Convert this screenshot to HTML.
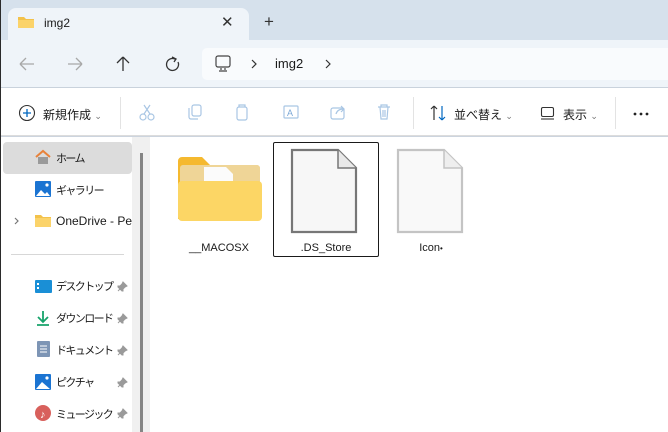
<!DOCTYPE html>
<html><head><meta charset="utf-8"><style>
*{margin:0;padding:0;box-sizing:border-box}
body{width:668px;height:432px;overflow:hidden;background:#fff;font-family:"Segoe UI","Liberation Sans","Noto Sans CJK JP",sans-serif;font-size:12px;color:#1a1a1a;position:relative}
.abs{position:absolute}
#tabbar{left:0;top:0;width:668px;height:40px;background:#d6e1ec}
#tab{left:8px;top:8px;width:241px;height:34px;background:#eff4f9;border-radius:8px 8px 0 0}
#nav{left:0;top:40px;width:668px;height:48px;background:#eff4f9;border-bottom:1px solid #c9d2dc}
#addr{left:202px;top:48px;width:466px;height:32px;background:#f9fbfd;border-radius:5px 0 0 5px}
#tool{left:0;top:89px;width:668px;height:47px;background:#fff;border-bottom:1px solid #dcdcdc}
.sep{position:absolute;top:97px;width:1px;height:32px;background:#e3e3e3}
#lb{left:0;top:0;width:1px;height:432px;background:#2b2b2b}
.side{position:absolute;left:34px;font-size:11px;letter-spacing:-1.6px;color:#1a1a1a;white-space:nowrap}
.pin{position:absolute;left:117px}
.lbl{position:absolute;font-size:11px;color:#1a1a1a;text-align:center}
.tt{position:absolute;font-size:12px}
</style></head><body>
<div class="abs" id="tabbar"></div>
<div class="abs" id="tab"></div>
<svg class="abs" style="left:17px;top:15px" width="18" height="14"><path d="M1 2h6l2 2h8v9H1z" fill="#f3c24b"/><path d="M1 5h16v8H1z" fill="#fbd36a"/></svg>
<div class="tt" style="left:44px;top:16px;font-size:12px">img2</div>
<div class="tt" style="left:221px;top:13px;font-size:15px;color:#333">✕</div>
<div class="tt" style="left:264px;top:12px;font-size:17px;color:#333">+</div>
<div class="abs" id="nav"></div>
<div class="abs" id="addr"></div>
<svg class="abs" style="left:18px;top:55px" width="200" height="18" fill="none" stroke-width="1.3">
<path d="M2 9h14M2 9l6-6M2 9l6 6" stroke="#a8a8a8"/>
<path d="M50 9h14M64 9l-6-6M64 9l-6 6" stroke="#a8a8a8"/>
<path d="M105 2v14M105 2l-6 6M105 2l6 6" stroke="#333"/>
<path d="M157 4a6 6 0 1 0 3 3M154 2l4 2-2 3" stroke="#333"/>
</svg>
<svg class="abs" style="left:214px;top:55px" width="20" height="18" fill="none" stroke="#444" stroke-width="1.2"><rect x="2" y="1" width="14" height="11" rx="2"/><path d="M7 13v2M11 13v2M5 16h8"/></svg>
<svg class="abs" style="left:250px;top:58px" width="100" height="12" fill="none" stroke="#333" stroke-width="1.2"><path d="M2 2l4 4-4 4"/><path d="M76 2l4 4-4 4"/></svg>
<div class="tt" style="left:275px;top:56px;font-size:13px">img2</div>
<div class="abs" id="tool"></div>
<div class="sep" style="left:120px"></div><div class="sep" style="left:413px"></div><div class="sep" style="left:615px"></div>
<svg class="abs" style="left:18px;top:104px" width="18" height="18" fill="none"><circle cx="9" cy="9" r="7.5" stroke="#333" stroke-width="1.1"/><path d="M9 5v8M5 9h8" stroke="#0067c0" stroke-width="1.3"/></svg>
<div class="tt" style="left:43px;top:106px">新規作成 <span style="font-size:9px;color:#777">⌄</span></div>
<svg class="abs" style="left:138px;top:102px" width="260" height="22" fill="none" stroke="#a9c6e4" stroke-width="1.2">
<circle cx="5" cy="15" r="3"/><circle cx="13" cy="15" r="3"/><path d="M6 12L12 3M12 12L6 3"/>
<rect x="54" y="3" width="9" height="11" rx="2"/><path d="M51 6v9a2 2 0 0 0 2 2h7"/>
<rect x="99" y="5" width="10" height="13" rx="2"/><path d="M101 5V3h6v2"/>
<rect x="146" y="4" width="14" height="12" rx="1"/><text x="149" y="14" font-size="9" fill="#7aa7d6" stroke="none">A</text>
<rect x="193" y="6" width="13" height="11" rx="2"/><path d="M198 12c1-4 4-5 8-5M203 4l3 3-3 3"/>
<path d="M240 5h12M243 5V3h6v2M242 5l1 12h6l1-12M245 8v7M247 8v7"/>
</svg>
<svg class="abs" style="left:429px;top:104px" width="20" height="18" fill="none" stroke-width="1.2"><path d="M5 16V2M5 2L2 5M5 2l3 3" stroke="#333"/><path d="M13 2v14M13 16l-3-3M13 16l3-3" stroke="#0067c0"/></svg>
<div class="tt" style="left:454px;top:106px">並べ替え <span style="font-size:9px;color:#777">⌄</span></div>
<svg class="abs" style="left:540px;top:106px" width="16" height="14" fill="none" stroke="#333" stroke-width="1.1"><rect x="1.5" y="1.5" width="12" height="9" rx="1.5"/><path d="M1 13h13"/></svg>
<div class="tt" style="left:563px;top:106px">表示 <span style="font-size:9px;color:#777">⌄</span></div>
<svg class="abs" style="left:632px;top:112px" width="20" height="4"><circle cx="3" cy="2" r="1.4" fill="#222"/><circle cx="9" cy="2" r="1.4" fill="#222"/><circle cx="15" cy="2" r="1.4" fill="#222"/></svg>
<!-- sidebar -->
<div class="abs" style="left:3px;top:142px;width:129px;height:32px;background:#dcdcdc;border-radius:4px"></div>
<div class="abs" style="left:132px;top:137px;width:18px;height:295px;background:#f0f0f0"></div>
<div class="abs" style="left:140px;top:153px;width:3px;height:279px;background:#858585"></div>
<div class="abs" style="left:0;top:136px;width:668px;height:1px;background:#ccd4de"></div>
<svg class="abs" style="left:34px;top:149px" width="18" height="16"><path d="M2 8L9 2l7 6" fill="none" stroke="#e8823a" stroke-width="2"/><path d="M4 8h10v7H4z" fill="#9a9a9a"/></svg>
<div class="side" style="left:56px;top:150px">ホーム</div>
<svg class="abs" style="left:35px;top:181px" width="16" height="16"><rect x="0" y="0" width="16" height="16" rx="1" fill="#1b74d2"/><path d="M1 15l5-6 4 4 2-2 3 4z" fill="#fff"/><circle cx="12" cy="4" r="1.6" fill="#fff"/></svg>
<div class="side" style="left:56px;top:182px">ギャラリー</div>
<svg class="abs" style="left:14px;top:217px" width="6" height="8" fill="none" stroke="#777" stroke-width="1.2"><path d="M1 1l3 3-3 3"/></svg>
<svg class="abs" style="left:34px;top:214px" width="18" height="14"><path d="M1 1h6l2 2h8v10H1z" fill="#f3c24b"/><path d="M1 4h16v9H1z" fill="#fbd36a"/></svg>
<div class="side" style="left:56px;top:214px;letter-spacing:0;font-size:12px;width:76px;overflow:hidden">OneDrive - Per</div>
<div class="abs" style="left:11px;top:254px;width:113px;height:1px;background:#d7d7d7"></div>
<svg class="abs" style="left:35px;top:280px" width="17" height="13"><rect width="17" height="13" rx="1" fill="#1a8fd6"/><rect x="2" y="3" width="2" height="2" fill="#fff"/><rect x="2" y="7" width="2" height="2" fill="#fff"/></svg>
<div class="side" style="left:56px;top:278px">デスクトップ</div>
<svg class="abs" style="left:35px;top:310px" width="16" height="16" fill="none" stroke="#17a36b" stroke-width="1.8"><path d="M8 1v10M3 7l5 5 5-5M2 15h12"/></svg>
<div class="side" style="left:56px;top:310px">ダウンロード</div>
<svg class="abs" style="left:37px;top:341px" width="13" height="16"><rect width="13" height="16" rx="1" fill="#7d95b5"/><path d="M3 5h7M3 8h7M3 11h7" stroke="#fff"/></svg>
<div class="side" style="left:56px;top:342px">ドキュメント</div>
<svg class="abs" style="left:35px;top:374px" width="16" height="16"><rect width="16" height="16" rx="1" fill="#1b74d2"/><path d="M1 15l6-7 8 7z" fill="#fff"/><circle cx="12" cy="4" r="1.6" fill="#fff"/></svg>
<div class="side" style="left:56px;top:374px">ピクチャ</div>
<svg class="abs" style="left:35px;top:405px" width="16" height="16"><circle cx="8" cy="8" r="8" fill="#d8605c"/><text x="5" y="13" font-size="11" fill="#fff">♪</text></svg>
<div class="side" style="left:56px;top:406px">ミュージック</div>
<svg class="pin" style="top:281px" width="11" height="11"><path d="M6 1l4 4-2 1-2 2 0 2-1 0-4-4 0-1 2 0 2-2z M3 8l-2 2" fill="#9a9a9a" stroke="#9a9a9a"/></svg>
<svg class="pin" style="top:313px" width="11" height="11"><path d="M6 1l4 4-2 1-2 2 0 2-1 0-4-4 0-1 2 0 2-2z M3 8l-2 2" fill="#9a9a9a" stroke="#9a9a9a"/></svg>
<svg class="pin" style="top:345px" width="11" height="11"><path d="M6 1l4 4-2 1-2 2 0 2-1 0-4-4 0-1 2 0 2-2z M3 8l-2 2" fill="#9a9a9a" stroke="#9a9a9a"/></svg>
<svg class="pin" style="top:377px" width="11" height="11"><path d="M6 1l4 4-2 1-2 2 0 2-1 0-4-4 0-1 2 0 2-2z M3 8l-2 2" fill="#9a9a9a" stroke="#9a9a9a"/></svg>
<svg class="pin" style="top:408px" width="11" height="11"><path d="M6 1l4 4-2 1-2 2 0 2-1 0-4-4 0-1 2 0 2-2z M3 8l-2 2" fill="#9a9a9a" stroke="#9a9a9a"/></svg>
<!-- content -->
<svg class="abs" style="left:176px;top:155px" width="86" height="70"><path d="M2 6a4 4 0 0 1 4-4h20l8 8h46a4 4 0 0 1 4 4v50H2z" fill="#f5b92f"/><rect x="4" y="10" width="80" height="40" rx="3" fill="#efd597"/><path d="M28 12h22l7 7v24H28z" fill="#fbfbfb"/><path d="M2 30a4 4 0 0 1 4-4h76a4 4 0 0 1 4 4v32a4 4 0 0 1-4 4H6a4 4 0 0 1-4-4z" fill="#fcd665"/></svg>
<div class="lbl" style="left:176px;top:242px;width:86px">__MACOSX</div>
<div class="abs" style="left:273px;top:142px;width:106px;height:115px;border:1px solid #1a1a1a;border-radius:2px"></div>
<svg class="abs" style="left:290px;top:148px" width="70" height="86"><path d="M2 2h46l18 18v64H2z" fill="#f7f7f7" stroke="#777" stroke-width="2.2"/><path d="M48 2v18h18" fill="#e9e9e9" stroke="#777" stroke-width="1.5"/></svg>
<div class="lbl" style="left:273px;top:242px;width:106px">.DS_Store</div>
<svg class="abs" style="left:396px;top:148px" width="70" height="86"><path d="M2 2h46l18 18v64H2z" fill="#f9f9f9" stroke="#c4c4c4" stroke-width="2.2"/><path d="M48 2v18h18" fill="#eee" stroke="#c4c4c4" stroke-width="1.5"/></svg>
<div class="lbl" style="left:396px;top:242px;width:70px">Icon<span style="font-size:8px">•</span></div>
<div class="abs" id="lb"></div>
</body></html>
